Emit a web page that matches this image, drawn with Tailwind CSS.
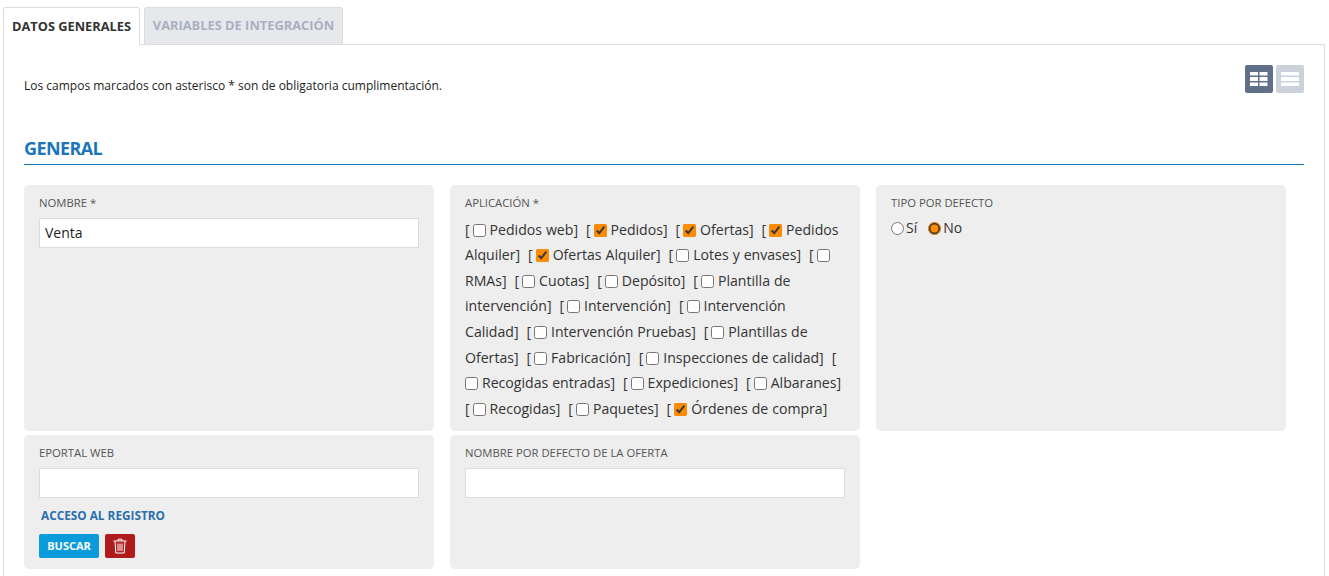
<!DOCTYPE html>
<html>
  <head>
    <meta charset="UTF-8" />
    <title>Datos generales</title>
    <script src="https://cdn.jsdelivr.net/npm/@tailwindcss/browser@4"></script>
  </head>
  <body class="bg-white font-['Open_Sans',sans-serif] text-[#333] h-[576px] overflow-hidden">
    <div class="pl-[3px] pr-[4px] pt-[7px]">
      <!-- tabs -->
      <div class="flex gap-[4px] h-[38px] relative z-10">
        <div class="w-[137px] h-[38px] bg-white border border-[#ddd] border-b-0 rounded-t-[3px] flex items-center justify-center text-[12.8px] font-bold text-[#333]">DATOS GENERALES</div>
        <div class="w-[199px] h-[37px] bg-[#e7e8ec] border border-[#ddd] border-b-0 rounded-t-[3px] flex items-center justify-center text-[12.85px] font-bold text-[#a9b0bf]">VARIABLES DE INTEGRACIÓN</div>
      </div>
      <div class="border border-[#ddd] -mt-[1px] h-[540px] pl-[20px] pr-[20px] pt-[20px]">
        <div class="flex justify-between items-start h-[70px]">
          <p class="text-[12px] text-[#222] pt-[12px] leading-[18px]">Los campos marcados con asterisco * son de obligatoria cumplimentación.</p>
          <div class="flex gap-[3px]">
            <button class="w-[28px] h-[28px] bg-[#5f7088] rounded-[2px] flex items-center justify-center">
              <svg width="18" height="15" viewBox="0 0 18 15" fill="#fff"><rect x="0" y="0" width="8" height="3.5"/><rect x="9.5" y="0" width="8" height="3.5"/><rect x="0" y="5" width="8" height="4"/><rect x="9.5" y="5" width="8" height="4"/><rect x="0" y="10.5" width="8" height="3.5"/><rect x="9.5" y="10.5" width="8" height="3.5"/></svg>
            </button>
            <button class="w-[28px] h-[28px] bg-[#cbd2dc] rounded-[2px] flex items-center justify-center">
              <svg width="18" height="15" viewBox="0 0 18 15" fill="#fff"><rect x="0" y="0" width="18" height="3.5"/><rect x="0" y="5" width="18" height="4"/><rect x="0" y="10.5" width="18" height="3.5"/></svg>
            </button>
          </div>
        </div>
        <h2 class="text-[18px] font-bold text-[#1b75bb] leading-[24px] tracking-[-0.6px] border-b border-[#1878c0] h-[30px] pt-[1px]">GENERAL</h2>
        <div class="grid grid-cols-[410px_410px_410px] gap-x-[16px] gap-y-[4px] mt-[20px]">
          <div class="bg-[#eee] rounded-[5px] h-[246px] px-[15px] pt-[10px]">
            <label class="block text-[11.3px] leading-[16px] text-[#555]">NOMBRE *</label>
            <input value="Venta" class="block w-[380px] h-[30px] mt-[7px] bg-white border border-[#ddd] px-[5px] pb-[2px] text-[14px] text-[#222]" />
          </div>
          <div class="bg-[#eee] rounded-[5px] h-[246px] px-[15px] pt-[10px]">
            <label class="block text-[11.3px] leading-[16px] text-[#555]">APLICACIÓN *</label>
            <div class="mt-[5.7px] text-[14.1px] leading-[25.6px] [word-spacing:0.3px] text-[#333]">
              [<input type="checkbox" class="ml-[3px] align-[-2px]" /> Pedidos web] &nbsp;[<input type="checkbox" checked class="ml-[3px] align-[-2px] accent-[#ff8c00]" /> Pedidos] &nbsp;[<input type="checkbox" checked class="ml-[3px] align-[-2px] accent-[#ff8c00]" /> Ofertas] &nbsp;[<input type="checkbox" checked class="ml-[3px] align-[-2px] accent-[#ff8c00]" /> Pedidos<br />
              Alquiler] &nbsp;[<input type="checkbox" checked class="ml-[3px] align-[-2px] accent-[#ff8c00]" /> Ofertas Alquiler] &nbsp;[<input type="checkbox" class="ml-[3px] align-[-2px]" /> Lotes y envases] &nbsp;[<input type="checkbox" class="ml-[3px] align-[-2px]" /><br />
              RMAs] &nbsp;[<input type="checkbox" class="ml-[3px] align-[-2px]" /> Cuotas] &nbsp;[<input type="checkbox" class="ml-[3px] align-[-2px]" /> Depósito] &nbsp;[<input type="checkbox" class="ml-[3px] align-[-2px]" /> Plantilla de<br />
              intervención] &nbsp;[<input type="checkbox" class="ml-[3px] align-[-2px]" /> Intervención] &nbsp;[<input type="checkbox" class="ml-[3px] align-[-2px]" /> Intervención<br />
              Calidad] &nbsp;[<input type="checkbox" class="ml-[3px] align-[-2px]" /> Intervención Pruebas] &nbsp;[<input type="checkbox" class="ml-[3px] align-[-2px]" /> Plantillas de<br />
              Ofertas] &nbsp;[<input type="checkbox" class="ml-[3px] align-[-2px]" /> Fabricación] &nbsp;[<input type="checkbox" class="ml-[3px] align-[-2px]" /> Inspecciones de calidad] &nbsp;[<br />
              <input type="checkbox" class="align-[-2px]" /> Recogidas entradas] &nbsp;[<input type="checkbox" class="ml-[3px] align-[-2px]" /> Expediciones] &nbsp;[<input type="checkbox" class="ml-[3px] align-[-2px]" /> Albaranes]<br />
              [<input type="checkbox" class="ml-[3px] align-[-2px]" /> Recogidas] &nbsp;[<input type="checkbox" class="ml-[3px] align-[-2px]" /> Paquetes] &nbsp;[<input type="checkbox" checked class="ml-[3px] align-[-2px] accent-[#ff8c00]" /> Órdenes de compra]
            </div>
          </div>
          <div class="bg-[#eee] rounded-[5px] h-[246px] px-[15px] pt-[10px]">
            <label class="block text-[11.3px] leading-[16px] text-[#555]">TIPO POR DEFECTO</label>
            <div class="mt-[5px] text-[14px] leading-[24px] text-[#333] flex items-center">
              <input type="radio" name="tipo" class="w-[13px] h-[13px] mr-[2px]" />Sí
              <input type="radio" name="tipo" checked class="w-[13px] h-[13px] ml-[11px] mr-[2px] accent-[#ff8c00]" />No
            </div>
          </div>
          <div class="bg-[#eee] rounded-[5px] h-[134px] px-[15px] pt-[10px]">
            <label class="block text-[11.3px] leading-[16px] text-[#555]">EPORTAL WEB</label>
            <input class="block w-[380px] h-[30px] mt-[7px] bg-white border border-[#ddd] px-[5px] text-[14px]" />
            <a class="block mt-[8px] ml-[2px] text-[11.8px] leading-[18px] font-bold text-[#2a6fad]">ACCESO AL REGISTRO</a>
            <div class="flex gap-[6px] mt-[10px]">
              <button class="w-[60px] h-[24px] bg-[#0a9bdc] rounded-[2px] text-white text-[11px] font-bold">BUSCAR</button>
              <button class="w-[30px] h-[24px] bg-[#b01c1c] rounded-[2px] flex items-center justify-center">
                <svg width="14" height="16" viewBox="0 0 14 16" fill="none" stroke="#fff" stroke-width="1"><path d="M0.5 3h13"/><path d="M5 3V1.2h4V3"/><path d="M2 3l0.8 12h8.4L12 3"/><path d="M5 5.5v7.5M7 5.5v7.5M9 5.5v7.5"/></svg>
              </button>
            </div>
          </div>
          <div class="bg-[#eee] rounded-[5px] h-[134px] px-[15px] pt-[10px]">
            <label class="block text-[11.3px] leading-[16px] text-[#555]">NOMBRE POR DEFECTO DE LA OFERTA</label>
            <input class="block w-[380px] h-[30px] mt-[7px] bg-white border border-[#ddd] px-[5px] text-[14px]" />
          </div>
        </div>
      </div>
    </div>
  </body>
</html>
